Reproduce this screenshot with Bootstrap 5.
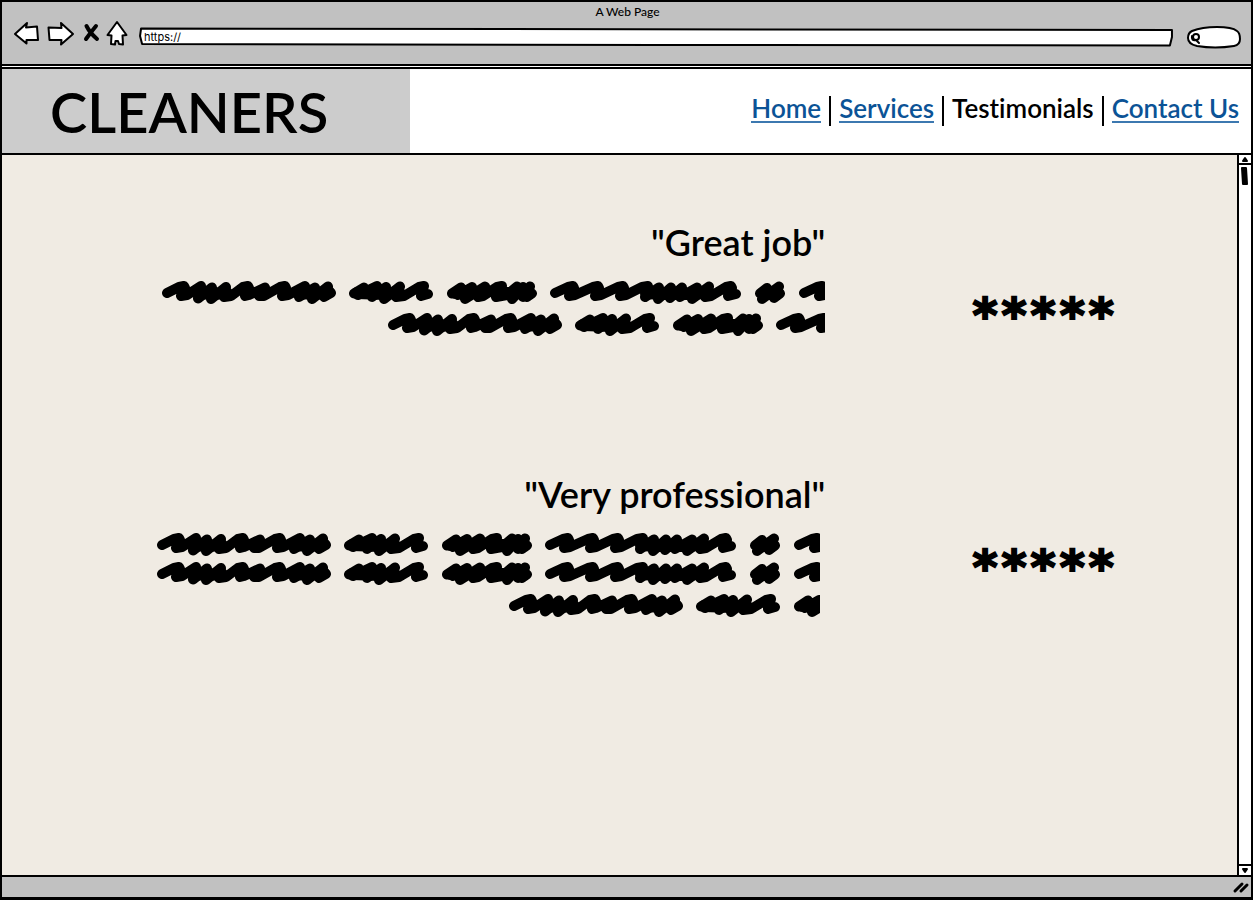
<!DOCTYPE html>
<html lang="en">
<head>
<meta charset="utf-8">
<meta name="viewport" content="width=device-width, initial-scale=1">
<title>A Web Page</title>
<link href="https://cdn.jsdelivr.net/npm/bootstrap@5.3.0/dist/css/bootstrap.min.css" rel="stylesheet">
<style>
  body { font-family: Lato, "Open Sans", sans-serif; font-weight: 500; color: #000; background: #fff; font-variant-ligatures: none; }
  .frame { border: 2px solid #000; border-bottom-width: 3px; }
  .chrome { background: #c1c1c1; border-bottom: 2px solid #000; height: 64px; padding: 0 10px 0 12px; }
  .chrome-title { font-size: 12px; line-height: 20px; }
  .tools { height: 30px; }
  .tool { line-height: 0; }
  .tool svg, .field svg { overflow: visible; }
  .ink { fill: #fff; stroke: #000; stroke-width: 2; stroke-linejoin: round; stroke-linecap: round; vector-effect: non-scaling-stroke; }
  .field input { background: transparent; outline: 0; color: #000; }
  .address { margin: 6px 14px 0 11px; height: 18px; }
  .address input { font-family: Inter, sans-serif; font-size: 11px; line-height: 18px; padding: 0 5px; }
  .search { width: 54px; height: 22px; margin-top: 5px; }
  .search input { padding: 0 6px 0 16px; font-size: 11px; }
  .brandbar { height: 88px; border-top: 2px solid #000; border-bottom: 2px solid #000; margin-top: 1px; }
  .brand { width: 32.7%; min-width: 300px; background: #ccc; padding-left: 48px; font-size: 56px; line-height: 86px; font-weight: 600; }
  .menu { font-size: 26px; line-height: 25px; font-weight: 600; padding-right: 12px; }
  .menu li { padding: 0 8px 3px; }
  .menu li + li { border-left: 2px solid #000; }
  .menu li:last-child { padding-right: 0; }
  .menu a { color: #0b5396; text-decoration: none; display: block; border-bottom: 2px solid #3c78b0; }
  .page-area { background: #f0ebe3; }
  .quotes { padding-top: 63px; }
  .quote { margin-bottom: 125px; }
  .quote h2 { font-size: 36px; line-height: 48px; font-weight: 600; margin: 0 0 14px; }
  .scribble { display: block; margin-left: auto; height: 26px; max-width: 100%; }
  .stars { font-family: "DejaVu Sans", sans-serif; font-weight: 700; font-size: 48px; line-height: 60px; gap: 4px; padding: 67px 0 0 24px; -webkit-text-stroke: 2px #000; }
  .inset { padding-right: 5px; }
  .gap-s { margin-top: 3px; }
  .gap-m { margin-top: 6px; }
  .scroller { width: 14px; background: #fff; border-left: 2px solid #000; }
  .scroller button { height: 11px; line-height: 0; }
  .scroller svg { display: block; }
  .statusbar { height: 22px; background: #c1c1c1; border-top: 2px solid #000; }
</style>
</head>
<body>
<div class="frame min-vh-100 d-flex flex-column">
  <header class="chrome">
    <div class="chrome-title text-center">A Web Page</div>
    <div class="tools d-flex align-items-start">
      <button class="tool btn p-0 border-0" aria-label="Back"><svg width="26" height="26" viewBox="0 0 26 26"><path class="ink" d="M1 12 13 1 12 5.500 23 4.500 24 18 12.500 18 12.500 21.500Z"/></svg></button>
      <button class="tool btn p-0 border-0 ms-2" aria-label="Forward"><svg width="26" height="26" viewBox="0 0 26 26"><path class="ink" d="M25 12 13 1 13.500 6 0.500 5.500 1.500 18 13.500 18 13 22.500Z"/></svg></button>
      <button class="tool btn p-0 border-0 ms-2" aria-label="Stop"><svg width="18" height="26" viewBox="0 0 18 26"><path d="M4.500 4Q8 11 15 17M14 4Q9 10 4 17" fill="none" stroke="#000" stroke-width="4" stroke-linecap="round"/></svg></button>
      <button class="tool btn p-0 border-0 ms-1" aria-label="Home"><svg width="24" height="26" viewBox="0 0 24 26"><path class="ink" d="M13 0 22.500 13 18.500 13.500 19 22.500 15 22 14 19 11.500 19 11 22.500 7 22 7.500 13.500 3.500 13Z"/></svg></button>
      <div class="address field position-relative flex-grow-1">
        <svg class="position-absolute w-100 h-100" viewBox="0 0 100 18" preserveAspectRatio="none" aria-hidden="true"><path class="ink" d="M0.200 0.500 60 1.500 99.900 2 99.900 9 99.700 17.500 50 17 0.300 16 0.100 8Z"/></svg>
        <input class="position-relative border-0 w-100 d-block" type="text" aria-label="Address" value="https://">
      </div>
      <div class="search field position-relative">
        <svg class="position-absolute" width="54" height="22" viewBox="0 0 54 22" aria-hidden="true"><path class="ink" d="M5 4Q15 0 30 0T50 4Q53 6 53 12 53 18 47 19 28 22 10 19 1 17 1 11 1 6 5 4Z"/><path class="ink" d="M5 9Q4 14 9 13L12 16"/><circle class="ink" cx="9" cy="10" r="3"/></svg>
        <input class="position-relative border-0 w-100 h-100 d-block" type="text" aria-label="Search">
      </div>
    </div>
  </header>

  <div class="brandbar bg-white d-flex">
    <div class="brand">CLEANERS</div>
    <nav class="ms-auto d-flex align-items-center" aria-label="Main">
      <ul class="menu list-unstyled d-flex mb-0">
        <li><a href="#">Home</a></li>
        <li><a href="#">Services</a></li>
        <li aria-current="page">Testimonials</li>
        <li><a href="#">Contact Us</a></li>
      </ul>
    </nav>
  </div>

  <div class="page-area flex-grow-1 d-flex">
    <main class="quotes flex-grow-1">
      <svg width="0" height="0" class="position-absolute" aria-hidden="true">
        <defs>
          <g id="scrawl" fill="none" stroke="#000" stroke-width="10" stroke-linecap="round" stroke-linejoin="round">
            <path d="M6 13 18 7 23 6 24 8 20 16 26 15 40 6 37 18.500 51 7.500 50 19 65 7 63 17 70 16 82 7 87 6 88 8 84 16 88 15 104 7.500 98 16 103 16 119 7 124 6 125 8 121 16 127 15 144 6 138 17 154 7.500 151 19 167 6.500 163 17 170 13"/>
            <path d="M193 13.500 203 7.500 197 15 216 6 211 17 225 7 223 19 239 6.500 235 17 243 16 258 7 263 6 260 16 267 14"/>
            <path d="M291 13.500 300 7.500 297 15 311 7 304 19 324 6.500 317 17 322 16 336 7 341 6 335 17 346 15 356 6.500 351 19 362 7 362 17 369 6.500 366 17 371 13.500"/>
            <path d="M394 13 407 7 412 6 413 8 408 16 414 15 432 7 437 6 438 8 434 16 440 15 457 7 462 6 463 8 459 16 465 15 481 7 487 6 484 17 498 7.500 497 19 510 7.500 509 18 521 7.500 519 17 536 7.500 531 19 548 6.500 544 17 550 16 565 7 570 6 571 8 567 16 575 14"/>
            <path d="M599 13.500 606 8 601 19 618 6.500 613 18 619 13.500"/>
            <path d="M643 13 656 7 661 6 662 8 658 16 668 14"/>
            <path stroke-width="12" d="M40 13 50 14 66 13M100 12H104M138 13 153 14 168 12M196 13 223 14 238 12M295 13 322 12M338 13 368 13M485 13 500 14 533 14 546 12M602 13H617"/>
          </g>
        </defs>
      </svg>

      <section class="quote row g-0">
        <div class="col-8 text-end">
          <h2>"Great job"</h2>
          <svg class="scribble" width="664" role="img" aria-label="Testimonial text"><use href="#scrawl"/></svg>
          <svg class="scribble gap-m" width="438" aria-hidden="true"><use href="#scrawl"/></svg>
        </div>
        <div class="stars col-4 d-flex justify-content-center"><span>*</span><span>*</span><span>*</span><span>*</span><span>*</span></div>
      </section>

      <section class="quote row g-0">
        <div class="col-8 text-end">
          <h2>"Very professional"</h2>
          <div class="inset">
            <svg class="scribble" width="664" role="img" aria-label="Testimonial text"><use href="#scrawl"/></svg>
            <svg class="scribble gap-s" width="664" aria-hidden="true"><use href="#scrawl"/></svg>
            <svg class="scribble gap-m" width="312" aria-hidden="true"><use href="#scrawl"/></svg>
          </div>
        </div>
        <div class="stars col-4 d-flex justify-content-center"><span>*</span><span>*</span><span>*</span><span>*</span><span>*</span></div>
      </section>
    </main>

    <div class="scroller d-flex flex-column">
      <button class="btn p-0 border-0 rounded-0" aria-label="Scroll up"><svg width="12" height="11" viewBox="0 0 12 11"><path d="M6 3 8 6H4ZM0 9H12" stroke="#000" stroke-width="2" stroke-linejoin="round"/></svg></button>
      <svg width="12" height="20" viewBox="0 0 12 20" aria-hidden="true"><path d="M3 2H7L8 18H4Z" stroke="#000" stroke-width="2" stroke-linejoin="round"/></svg>
      <button class="btn p-0 border-0 rounded-0 mt-auto" aria-label="Scroll down"><svg width="12" height="11" viewBox="0 0 12 11"><path d="M6 8 8 5H4ZM0 1H12" stroke="#000" stroke-width="2" stroke-linejoin="round"/></svg></button>
    </div>
  </div>

  <footer class="statusbar d-flex justify-content-end align-items-center">
    <svg width="20" height="16" viewBox="0 0 20 16" aria-hidden="true"><path d="M4 12 11 5M10 12 16 6" stroke="#000" stroke-width="3" stroke-linecap="round"/></svg>
  </footer>
</div>
<script src="https://cdn.jsdelivr.net/npm/bootstrap@5.3.0/dist/js/bootstrap.bundle.min.js"></script>
</body>
</html>
